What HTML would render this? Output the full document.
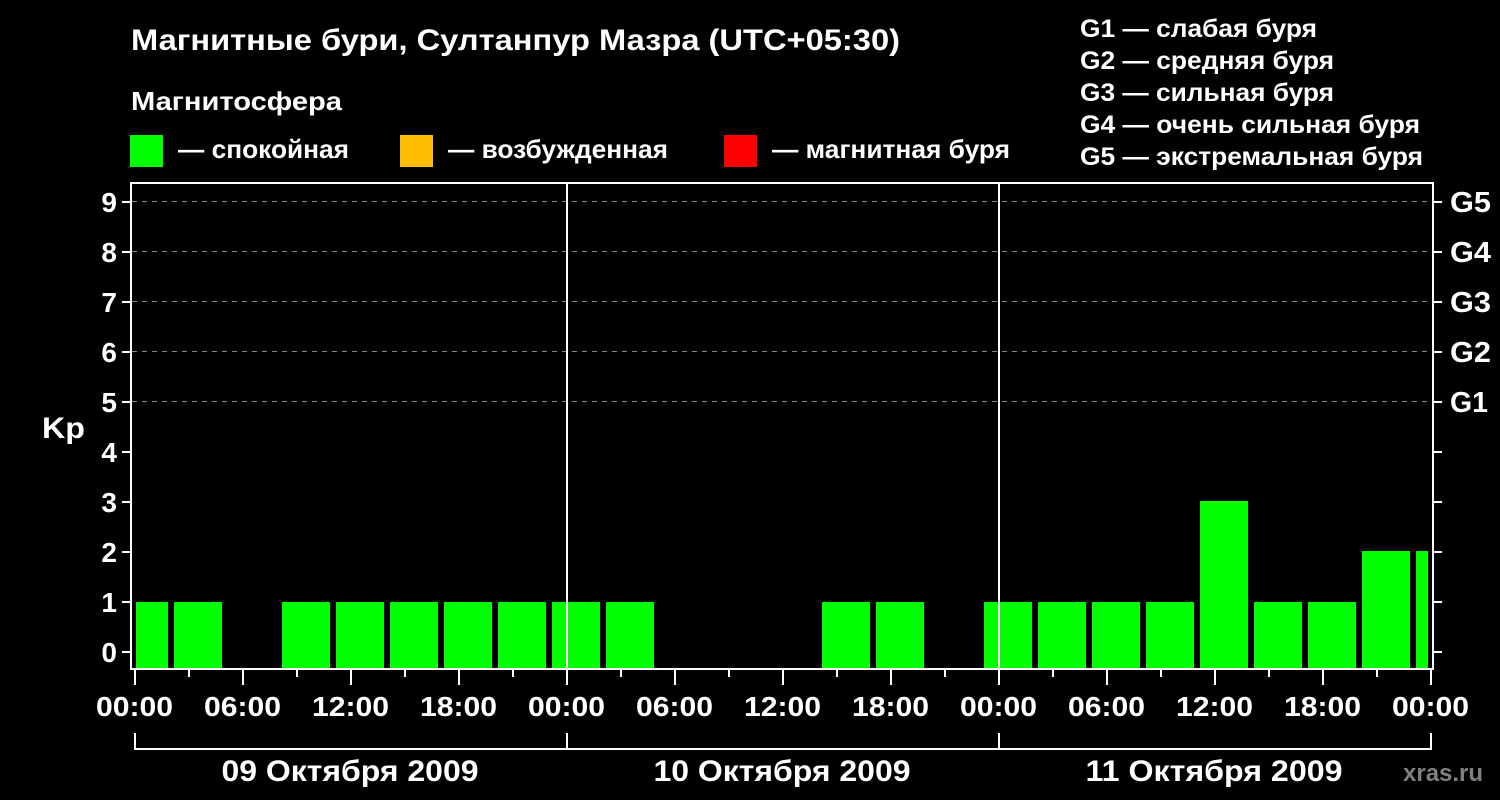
<!DOCTYPE html>
<html><head><meta charset="utf-8"><style>
html,body{margin:0;padding:0;background:#000;width:1500px;height:800px;overflow:hidden}
svg{display:block}
text{font-family:"Liberation Sans",Arial,sans-serif;font-weight:bold;fill:#fff}
</style></head><body>
<svg width="1500" height="800" viewBox="0 0 1500 800" xmlns="http://www.w3.org/2000/svg">
<rect width="1500" height="800" fill="#000"/>
<text x="131" y="50" font-size="30" textLength="769" lengthAdjust="spacingAndGlyphs">Магнитные бури, Султанпур Мазра (UTC+05:30)</text>
<text x="131" y="110" font-size="26" textLength="211" lengthAdjust="spacingAndGlyphs">Магнитосфера</text>
<rect x="130" y="135" width="33" height="32" fill="#00ff00"/>
<text x="178" y="158" font-size="26" textLength="171" lengthAdjust="spacingAndGlyphs">— спокойная</text>
<rect x="400" y="135" width="33" height="32" fill="#ffbf00"/>
<text x="448" y="158" font-size="26" textLength="220" lengthAdjust="spacingAndGlyphs">— возбужденная</text>
<rect x="724" y="135" width="33" height="32" fill="#ff0000"/>
<text x="772" y="158" font-size="26" textLength="238" lengthAdjust="spacingAndGlyphs">— магнитная буря</text>
<g font-size="25">
<text x="1080" y="37" textLength="237" lengthAdjust="spacingAndGlyphs">G1 — слабая буря</text>
<text x="1080" y="69" textLength="254" lengthAdjust="spacingAndGlyphs">G2 — средняя буря</text>
<text x="1080" y="101" textLength="254" lengthAdjust="spacingAndGlyphs">G3 — сильная буря</text>
<text x="1080" y="133" textLength="340" lengthAdjust="spacingAndGlyphs">G4 — очень сильная буря</text>
<text x="1080" y="165" textLength="343" lengthAdjust="spacingAndGlyphs">G5 — экстремальная буря</text>
</g>
<g stroke="#888" stroke-width="1" stroke-dasharray="5,5">
<line x1="132" y1="201.5" x2="1432" y2="201.5"/>
<line x1="132" y1="251.5" x2="1432" y2="251.5"/>
<line x1="132" y1="301.5" x2="1432" y2="301.5"/>
<line x1="132" y1="351.5" x2="1432" y2="351.5"/>
<line x1="132" y1="401.5" x2="1432" y2="401.5"/>
</g>
<g fill="#00ff00">
<rect x="136" y="602" width="32" height="66"/>
<rect x="174" y="602" width="48" height="66"/>
<rect x="282" y="602" width="48" height="66"/>
<rect x="336" y="602" width="48" height="66"/>
<rect x="390" y="602" width="48" height="66"/>
<rect x="444" y="602" width="48" height="66"/>
<rect x="498" y="602" width="48" height="66"/>
<rect x="552" y="602" width="48" height="66"/>
<rect x="606" y="602" width="48" height="66"/>
<rect x="822" y="602" width="48" height="66"/>
<rect x="876" y="602" width="48" height="66"/>
<rect x="984" y="602" width="48" height="66"/>
<rect x="1038" y="602" width="48" height="66"/>
<rect x="1092" y="602" width="48" height="66"/>
<rect x="1146" y="602" width="48" height="66"/>
<rect x="1200" y="501" width="48" height="167"/>
<rect x="1254" y="602" width="48" height="66"/>
<rect x="1308" y="602" width="48" height="66"/>
<rect x="1362" y="551" width="48" height="117"/>
<rect x="1416" y="551" width="12" height="117"/>
</g>
<g stroke="#fff" stroke-width="2" fill="none">
<polyline points="131,669 131,183 1433,183 1433,669"/>
<line x1="130" y1="669" x2="1434" y2="669"/>
<line x1="567" y1="183" x2="567" y2="669"/>
<line x1="999" y1="183" x2="999" y2="669"/>
</g>
<g stroke="#fff" stroke-width="2">
<line x1="122" y1="652" x2="131" y2="652"/><line x1="1433" y1="652" x2="1442" y2="652"/>
<line x1="122" y1="602" x2="131" y2="602"/><line x1="1433" y1="602" x2="1442" y2="602"/>
<line x1="122" y1="552" x2="131" y2="552"/><line x1="1433" y1="552" x2="1442" y2="552"/>
<line x1="122" y1="502" x2="131" y2="502"/><line x1="1433" y1="502" x2="1442" y2="502"/>
<line x1="122" y1="452" x2="131" y2="452"/><line x1="1433" y1="452" x2="1442" y2="452"/>
<line x1="122" y1="402" x2="131" y2="402"/><line x1="1433" y1="402" x2="1442" y2="402"/>
<line x1="122" y1="352" x2="131" y2="352"/><line x1="1433" y1="352" x2="1442" y2="352"/>
<line x1="122" y1="302" x2="131" y2="302"/><line x1="1433" y1="302" x2="1442" y2="302"/>
<line x1="122" y1="252" x2="131" y2="252"/><line x1="1433" y1="252" x2="1442" y2="252"/>
<line x1="122" y1="202" x2="131" y2="202"/><line x1="1433" y1="202" x2="1442" y2="202"/>
</g>
<g font-size="28" text-anchor="end">
<text x="117" y="662">0</text><text x="117" y="612">1</text><text x="117" y="562">2</text>
<text x="117" y="512">3</text><text x="117" y="462">4</text><text x="117" y="412">5</text>
<text x="117" y="362">6</text><text x="117" y="312">7</text><text x="117" y="262">8</text>
<text x="117" y="212">9</text>
</g>
<text x="42" y="438" font-size="30" textLength="43" lengthAdjust="spacingAndGlyphs">Kp</text>
<g font-size="29">
<text x="1450" y="212" textLength="41" lengthAdjust="spacingAndGlyphs">G5</text>
<text x="1450" y="262" textLength="41" lengthAdjust="spacingAndGlyphs">G4</text>
<text x="1450" y="312" textLength="41" lengthAdjust="spacingAndGlyphs">G3</text>
<text x="1450" y="362" textLength="41" lengthAdjust="spacingAndGlyphs">G2</text>
<text x="1450" y="412" textLength="38" lengthAdjust="spacingAndGlyphs">G1</text>
</g>
<g stroke="#fff" stroke-width="2">
<line x1="135" y1="669" x2="135" y2="685"/><line x1="189" y1="669" x2="189" y2="677"/>
<line x1="243" y1="669" x2="243" y2="685"/><line x1="297" y1="669" x2="297" y2="677"/>
<line x1="351" y1="669" x2="351" y2="685"/><line x1="405" y1="669" x2="405" y2="677"/>
<line x1="459" y1="669" x2="459" y2="685"/><line x1="513" y1="669" x2="513" y2="677"/>
<line x1="567" y1="669" x2="567" y2="685"/><line x1="621" y1="669" x2="621" y2="677"/>
<line x1="675" y1="669" x2="675" y2="685"/><line x1="729" y1="669" x2="729" y2="677"/>
<line x1="783" y1="669" x2="783" y2="685"/><line x1="837" y1="669" x2="837" y2="677"/>
<line x1="891" y1="669" x2="891" y2="685"/><line x1="945" y1="669" x2="945" y2="677"/>
<line x1="999" y1="669" x2="999" y2="685"/><line x1="1053" y1="669" x2="1053" y2="677"/>
<line x1="1107" y1="669" x2="1107" y2="685"/><line x1="1161" y1="669" x2="1161" y2="677"/>
<line x1="1215" y1="669" x2="1215" y2="685"/><line x1="1269" y1="669" x2="1269" y2="677"/>
<line x1="1323" y1="669" x2="1323" y2="685"/><line x1="1377" y1="669" x2="1377" y2="677"/>
<line x1="1431" y1="669" x2="1431" y2="685"/>
</g>
<g font-size="28">
<text x="96" y="716" textLength="77" lengthAdjust="spacingAndGlyphs">00:00</text>
<text x="204" y="716" textLength="77" lengthAdjust="spacingAndGlyphs">06:00</text>
<text x="312" y="716" textLength="77" lengthAdjust="spacingAndGlyphs">12:00</text>
<text x="420" y="716" textLength="77" lengthAdjust="spacingAndGlyphs">18:00</text>
<text x="528" y="716" textLength="77" lengthAdjust="spacingAndGlyphs">00:00</text>
<text x="636" y="716" textLength="77" lengthAdjust="spacingAndGlyphs">06:00</text>
<text x="744" y="716" textLength="77" lengthAdjust="spacingAndGlyphs">12:00</text>
<text x="852" y="716" textLength="77" lengthAdjust="spacingAndGlyphs">18:00</text>
<text x="960" y="716" textLength="77" lengthAdjust="spacingAndGlyphs">00:00</text>
<text x="1068" y="716" textLength="77" lengthAdjust="spacingAndGlyphs">06:00</text>
<text x="1176" y="716" textLength="77" lengthAdjust="spacingAndGlyphs">12:00</text>
<text x="1284" y="716" textLength="77" lengthAdjust="spacingAndGlyphs">18:00</text>
<text x="1392" y="716" textLength="77" lengthAdjust="spacingAndGlyphs">00:00</text>
</g>
<g stroke="#fff" stroke-width="2">
<line x1="134" y1="749" x2="1432" y2="749"/>
<line x1="135" y1="733" x2="135" y2="749"/>
<line x1="567" y1="733" x2="567" y2="749"/>
<line x1="999" y1="733" x2="999" y2="749"/>
<line x1="1431" y1="733" x2="1431" y2="749"/>
</g>
<g font-size="30" text-anchor="middle">
<text x="350" y="781" textLength="257" lengthAdjust="spacingAndGlyphs">09 Октября 2009</text>
<text x="782" y="781" textLength="257" lengthAdjust="spacingAndGlyphs">10 Октября 2009</text>
<text x="1214" y="781" textLength="257" lengthAdjust="spacingAndGlyphs">11 Октября 2009</text>
</g>
<text x="1403" y="781" font-size="24" style="fill:#808080">xras.ru</text>
</svg>
</body></html>
